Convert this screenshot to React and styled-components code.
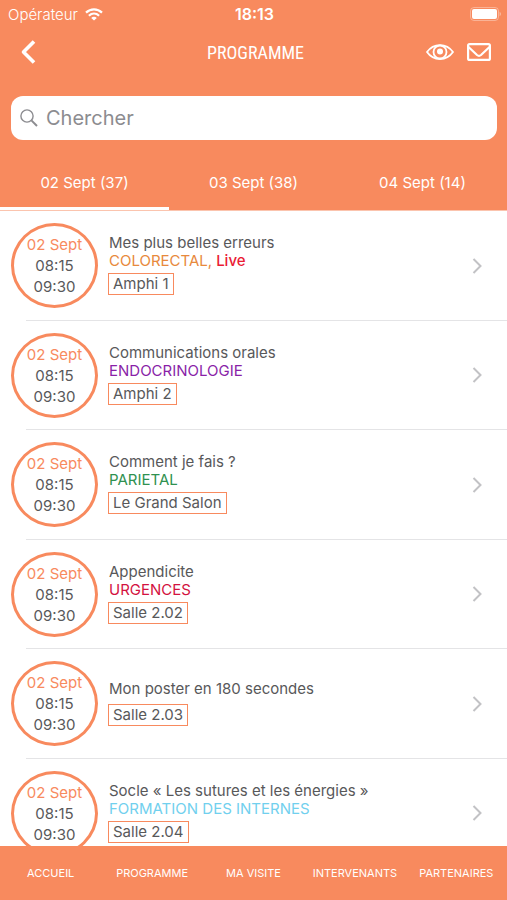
import React from "react";
import styled, { createGlobalStyle } from "styled-components";

const ORANGE = "#f88a5e";

const tabs = [
  { label: "02 Sept (37)", active: true },
  { label: "03 Sept (38)" },
  { label: "04 Sept (14)" }
];

const sessions = [
  {
    title: "Mes plus belles erreurs",
    tags: [
      { name: "COLORECTAL,", color: "#e8893c" },
      { name: "Live", color: "#ea1c35", strong: true }
    ],
    room: "Amphi 1"
  },
  {
    title: "Communications orales",
    tags: [{ name: "ENDOCRINOLOGIE", color: "#8a1fa8" }],
    room: "Amphi 2"
  },
  {
    title: "Comment je fais ?",
    tags: [{ name: "PARIETAL", color: "#2f9150" }],
    room: "Le Grand Salon"
  },
  {
    title: "Appendicite",
    tags: [{ name: "URGENCES", color: "#d3123f" }],
    room: "Salle 2.02"
  },
  { title: "Mon poster en 180 secondes", tags: [], room: "Salle 2.03" },
  {
    title: "Socle « Les sutures et les énergies »",
    tags: [{ name: "FORMATION DES INTERNES", color: "#71d0ee" }],
    room: "Salle 2.04"
  }
];

const links = ["ACCUEIL", "PROGRAMME", "MA VISITE", "INTERVENANTS", "PARTENAIRES"];

const WifiIcon = () => (
  <svg width="18" height="13" viewBox="0 0 18 13" fill="none" stroke="#fff" strokeWidth="2.2">
    <path d="M1 4.6C5.6.3 12.4.3 17 4.6" />
    <path d="M3.9 7.7c3-2.8 7.2-2.8 10.2 0" />
    <path d="M9 12.6 6.2 9.9c1.6-1.5 4-1.5 5.6 0z" fill="#fff" stroke="none" />
  </svg>
);

const BatteryIcon = () => (
  <svg width="31" height="14" viewBox="0 0 31 14">
    <rect x=".5" y=".5" width="28" height="13" rx="3.5" fill="none" stroke="#fff" strokeOpacity=".35" />
    <rect x="2" y="2" width="25" height="10" rx="2" fill="#fff" />
    <path d="M29.7 4.8c1.4.8 1.4 3.6 0 4.4z" fill="#fff" fillOpacity=".5" />
  </svg>
);

const BackIcon = () => (
  <svg width="16" height="26" viewBox="0 0 16 26" fill="none" stroke="#fff" strokeWidth="3.6">
    <path d="M14 2.5 3.5 13 14 23.5" strokeLinejoin="round" />
  </svg>
);

const EyeIcon = () => (
  <svg width="28" height="18" viewBox="0 0 28 18" fill="none" stroke="#fff" strokeWidth="1.8">
    <path d="M1 9C7.5-.3 20.5-.3 27 9 20.5 18.3 7.5 18.3 1 9z" strokeLinejoin="round" />
    <circle cx="14" cy="9" r="6.5" />
    <circle cx="14" cy="8.5" r="3" fill="#fff" stroke="none" />
  </svg>
);

const MailIcon = () => (
  <svg width="24" height="18" viewBox="0 0 24 18" fill="none" stroke="#fff" strokeWidth="2.2">
    <rect x="1.1" y="1.1" width="21.8" height="15.8" rx="1.5" />
    <path d="m1.5 4 8.500 8c1.200 1 2.800 1 4 0l8.500-8" />
  </svg>
);

const SearchIcon = () => (
  <svg width="18" height="18" viewBox="0 0 18 18" fill="none" stroke="#8c8c90">
    <circle cx="7" cy="7" r="6.1" strokeWidth="1.4" />
    <path d="m11.4 11.4 5.6 5.6" strokeWidth="2" />
  </svg>
);

const ChevronIcon = () => (
  <svg width="10" height="16" viewBox="0 0 10 16" fill="none" stroke="#c2c2c5" strokeWidth="2">
    <path d="m1.5 1 7 7-7 7" />
  </svg>
);

const Session = ({ session }) => (
  <SessionItem>
    <SessionLink href="#session">
      <TimeCircle>
        <Day>02 Sept</Day>
        <span>08:15</span>
        <span>09:30</span>
      </TimeCircle>
      <Details>
        <SessionTitle>{session.title}</SessionTitle>
        {session.tags.length > 0 && (
          <Tags>
            {session.tags.map(tag => (
              <Tag key={tag.name} $color={tag.color} $strong={tag.strong}>
                {tag.name}
              </Tag>
            ))}
          </Tags>
        )}
        <Room $spaced={session.tags.length === 0}>{session.room}</Room>
      </Details>
      <ChevronIcon />
    </SessionLink>
  </SessionItem>
);

const App = () => (
  <>
    <GlobalStyle />
    <Screen>
      <Header>
        <StatusBar>
          <Operator>
            Opérateur
            <WifiIcon />
          </Operator>
          <Clock>18:13</Clock>
          <Battery>
            <BatteryIcon />
          </Battery>
        </StatusBar>
        <TitleBar>
          <Actions>
            <IconButton aria-label="Retour">
              <BackIcon />
            </IconButton>
          </Actions>
          <PageTitle>PROGRAMME</PageTitle>
          <Actions $end>
            <IconButton aria-label="Afficher">
              <EyeIcon />
            </IconButton>
            <IconButton aria-label="Messages">
              <MailIcon />
            </IconButton>
          </Actions>
        </TitleBar>
        <SearchBox>
          <SearchIcon />
          <SearchInput type="text" placeholder="Chercher" aria-label="Chercher" />
        </SearchBox>
        <Tabs>
          {tabs.map(tab => (
            <Tab key={tab.label} $active={tab.active}>
              {tab.label}
            </Tab>
          ))}
        </Tabs>
      </Header>
      <SessionList>
        {sessions.map(session => (
          <Session key={session.title} session={session} />
        ))}
      </SessionList>
      <BottomNav>
        {links.map(link => (
          <NavLink key={link} href="#nav">
            {link}
          </NavLink>
        ))}
      </BottomNav>
    </Screen>
  </>
);

const GlobalStyle = createGlobalStyle`
  * {
    box-sizing: border-box;
  }

  body {
    margin: 0;
    background: white;
    color: #58585a;
    font-family: Inter, "Liberation Sans", sans-serif;
    font-size: 15px;
  }

  button, input {
    border: 0;
    padding: 0;
    background: none;
    color: inherit;
    font: inherit;
  }

  a {
    color: inherit;
    text-decoration: none;
  }

  svg {
    display: block;
    flex-shrink: 0;
  }
`;

const Screen = styled.div`
  display: flex;
  flex-direction: column;
  height: 100vh;
`;

const Header = styled.header`
  flex-shrink: 0;
  background: ${ORANGE};
  color: white;
`;

const StatusBar = styled.div`
  display: grid;
  grid-template-columns: 1fr auto 1fr;
  align-items: center;
  height: 28px;
  padding: 0 6px 0 8px;
`;

const Operator = styled.div`
  display: flex;
  align-items: center;
  gap: 7px;
  font-weight: 300;
`;

const Clock = styled.div`
  font-size: 16px;
  font-weight: 600;
`;

const Battery = styled.div`
  justify-self: end;
`;

const TitleBar = styled.div`
  display: grid;
  grid-template-columns: 1fr auto 1fr;
  align-items: center;
  height: 48px;
  padding: 0 16px 0 20px;
`;

const Actions = styled.div`
  display: flex;
  align-items: center;
  justify-content: ${props => (props.$end ? "flex-end" : "flex-start")};
  gap: 13px;
`;

const IconButton = styled.button`
  cursor: pointer;
`;

const PageTitle = styled.h1`
  margin: 0;
  font-family: "Roboto Condensed", "Liberation Sans Narrow", "Open Sans Condensed", Roboto, sans-serif;
  font-size: 18px;
  font-weight: 400;
`;

const SearchBox = styled.label`
  display: flex;
  align-items: center;
  gap: 8px;
  height: 44px;
  margin: 20px 10px 0 11px;
  padding: 0 9px;
  border-radius: 12px;
  background: white;
  color: #8c8c90;
`;

const SearchInput = styled.input`
  flex: 1;
  min-width: 0;
  outline: none;
  font-size: 20px;

  &::placeholder {
    color: #8c8c90;
    opacity: 1;
  }
`;

const Tabs = styled.div`
  display: grid;
  grid-template-columns: repeat(3, 1fr);
  margin-top: 14px;
`;

const Tab = styled.button`
  height: 56px;
  padding-top: 3px;
  border-bottom: 3px solid ${props => (props.$active ? "white" : "transparent")};
  cursor: pointer;
`;

const SessionList = styled.ul`
  display: grid;
  flex: 1;
  grid-auto-rows: 110px 109px;
  min-height: 0;
  margin: 0;
  padding: 0;
  border-top: 1px solid #fbc4ae;
  overflow-y: auto;
  scrollbar-width: none;
  list-style: none;
`;

const SessionItem = styled.li`
  display: flex;
  flex-direction: column;

  &::after {
    content: "";
    height: 1px;
    margin-left: 26px;
    background: #e4e4e6;
  }
`;

const SessionLink = styled.a`
  display: flex;
  flex: 1;
  align-items: center;
  padding: 0 25px 0 11px;
`;

const TimeCircle = styled.div`
  display: flex;
  flex-direction: column;
  align-items: center;
  justify-content: center;
  flex-shrink: 0;
  width: 87px;
  height: 85px;
  border: 3px solid ${ORANGE};
  border-radius: 50%;
  line-height: 21px;
`;

const Day = styled.span`
  color: ${ORANGE};
`;

const Details = styled.div`
  display: flex;
  flex: 1;
  flex-direction: column;
  align-items: flex-start;
  min-width: 0;
  margin-left: 10px;
  padding-bottom: 2px;
  line-height: 18px;
`;

const SessionTitle = styled.div`
  padding-left: 1px;
`;

const Tags = styled.div`
  display: flex;
  gap: 4px;
  padding-left: 1px;
`;

const Tag = styled.span`
  color: ${props => props.$color};
  font-weight: ${props => (props.$strong ? 500 : 400)};
`;

const Room = styled.div`
  margin-top: ${props => (props.$spaced ? 6 : 3)}px;
  padding: 0 4px;
  border: 1px solid ${ORANGE};
  line-height: 20px;
`;

const BottomNav = styled.nav`
  display: grid;
  grid-template-columns: repeat(5, 1fr);
  align-items: center;
  flex-shrink: 0;
  height: 54px;
  background: ${ORANGE};
  color: white;
`;

const NavLink = styled.a`
  font-size: 11px;
  text-align: center;
`;

export default App;
